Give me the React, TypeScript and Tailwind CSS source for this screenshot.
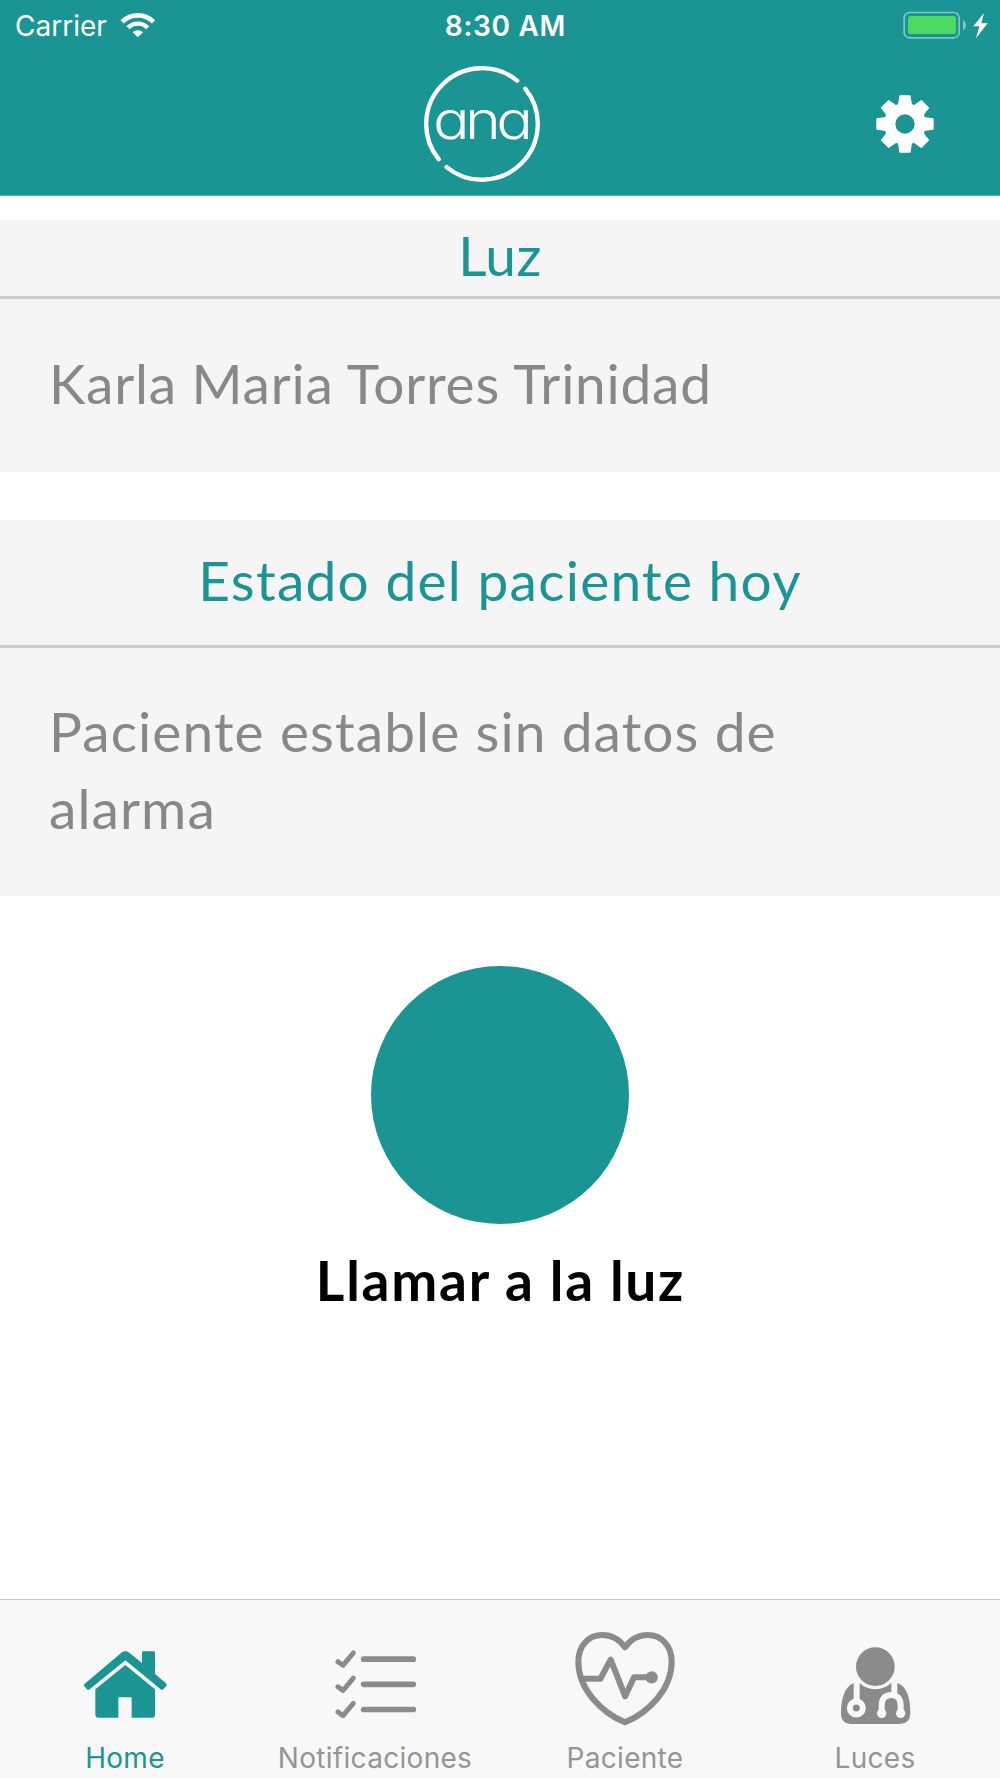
import React, { useState } from 'react'

const AnaLogo: React.FC = () => (
  <svg viewBox="65 193 360 360" className="h-[120px] w-[120px] text-white" fill="none">
    <path
      d="M115 478.600 A167.500 167.500 0 0 1 350.600 243 M375 267.400 A167.500 167.500 0 0 1 138.700 502.400"
      stroke="currentColor"
      strokeWidth="13"
      strokeLinecap="round"
    />
    <text
      x="98"
      y="418"
      textLength="286"
      lengthAdjust="spacingAndGlyphs"
      fill="currentColor"
      className="font-['Inter',sans-serif] text-[158px] font-[360] tracking-[-12px] [font-feature-settings:'cv11'] [text-rendering:geometricPrecision]"
    >
      ana
    </text>
  </svg>
)

const GearIcon: React.FC = () => (
  <svg viewBox="-90 -90 180 180" className="h-[60px] w-[60px] text-white" fill="currentColor">
    <circle r="46" fill="none" stroke="currentColor" strokeWidth="34" />
    {[0, 45, 90, 135, 180, 225, 270, 315].map((angle) => (
      <path
        key={angle}
        d="M-19 -56 Q-19 -60 -18 -63 L-15 -84 L15 -84 L18 -63 Q19 -60 19 -56 Z"
        stroke="currentColor"
        strokeWidth="4"
        strokeLinejoin="round"
        transform={`rotate(${angle})`}
      />
    ))}
  </svg>
)

const WifiIcon: React.FC = () => (
  <svg viewBox="360 30 108 90" className="h-[30px] w-9 text-white" fill="none">
    <path d="M366.500 62.500 A67 67 0 0 1 460.500 62.500" stroke="currentColor" strokeWidth="14" />
    <path d="M384 80 A41.500 41.500 0 0 1 443 80" stroke="currentColor" strokeWidth="13" />
    <path d="M413.500 109 L398 94 A22 22 0 0 1 429 94 Z" fill="currentColor" />
  </svg>
)

const BatteryIcon: React.FC = () => (
  <svg viewBox="186 27 264 96" className="h-8 w-[88px]">
    <rect x="192.500" y="34.500" width="165" height="76" rx="16" fill="none" stroke="#fff" strokeOpacity="0.45" strokeWidth="5" />
    <rect x="204" y="45" width="144" height="54" rx="8" fill="#4cd964" />
    <path d="M369 58 Q378 62 378 73 Q378 84 369 88 Z" fill="#fff" fillOpacity="0.45" />
    <path d="M432 36 L400 76 H418 L408 112 L443 67 H424 Z" fill="#fff" />
  </svg>
)

const HomeIcon: React.FC = () => (
  <svg viewBox="15 90 360 360" className="h-[120px] w-[120px]" fill="currentColor">
    <path d="M196 225 L106 298 V374 Q106 383 115 383 H175 V322 H215 V383 H276 Q285 383 285 374 V298 Z" />
    <path
      d="M187 186 Q196 181 205 186 L246 219 V188 Q246 184 250 184 H281 Q285 184 285 188 V252 L318 280 Q322 285 319 288 L310 298 Q306 301 302 298 L196 211 L89 298 Q85 302 81 298 L73 289 Q69 285 74 281 Z"
    />
  </svg>
)

const ChecklistIcon: React.FC = () => (
  <svg viewBox="165 90 360 360" className="h-[120px] w-[120px]" fill="none" stroke="currentColor" strokeLinecap="round" strokeLinejoin="round">
    {[0, 75.5, 151].map((y) => (
      <g key={y} transform={`translate(0 ${y})`}>
        <path d="M234 215 L249 226 L280 189" strokeWidth="15" />
        <path d="M311 207.500 H460" strokeWidth="17" />
      </g>
    ))}
  </svg>
)

const HeartIcon: React.FC = () => (
  <svg viewBox="75 90 360 360" className="h-[120px] w-[120px]" fill="none" stroke="currentColor" strokeLinecap="round" strokeLinejoin="round">
    <path
      d="M255 172 C238 148 214 135 187 135 C145 135 115 168 115 215 C115 298 185 368 255 397 C325 368 395 298 395 215 C395 168 365 135 323 135 C296 135 272 148 255 172 Z"
      strokeWidth="18"
    />
    <path d="M126 266.500 H181 L212 209 L255.500 319 L282 262 H334" strokeWidth="18" />
    <circle cx="335" cy="262" r="18.500" fill="currentColor" stroke="none" />
  </svg>
)

const DoctorIcon: React.FC = () => (
  <svg viewBox="45 90 360 360" className="h-[120px] w-[120px] text-[#8b8b8b]" fill="currentColor">
    <path d="M163 278 H291 C322 290 331 325 331 370 Q330 402 299 402 H155 Q123 402 123 370 C123 325 134 289 163 278 Z" />
    <circle cx="226" cy="230" r="68" className="text-[#f8f8f8]" />
    <g className="text-[#f8f8f8]" stroke="currentColor" strokeWidth="18" fill="none">
      <path d="M170 268 V335" />
      <path d="M283 268 V318" />
      <path d="M245 370 V346 C245 326 256 315 273.500 315 C291 315 302 326 302 346 V370" />
      <circle cx="169" cy="354" r="19.500" />
      <circle cx="245" cy="370" r="14" fill="currentColor" stroke="none" />
      <circle cx="302" cy="370" r="14" fill="currentColor" stroke="none" />
    </g>
    <circle cx="226" cy="230" r="58" />
  </svg>
)

const tabs = [
  { key: 'home', label: 'Home', icon: HomeIcon },
  { key: 'notificaciones', label: 'Notificaciones', icon: ChecklistIcon },
  { key: 'paciente', label: 'Paciente', icon: HeartIcon },
  { key: 'luces', label: 'Luces', icon: DoctorIcon },
]

const App: React.FC = () => {
  const [activeTab, setActiveTab] = useState('home')

  return (
    <div className="flex h-[1778px] w-[1000px] flex-col overflow-hidden bg-white font-['Lato',sans-serif]">
      {/* Header */}
      <header className="h-[196px] shrink-0 border-b border-[#54afaf] bg-[#1b9494]">
        <div className="grid h-[50px] grid-cols-[1fr_auto_1fr] items-center font-['Inter',sans-serif] text-[28px] leading-[52px] text-white">
          <div className="flex items-center gap-[13px] pl-[15px]">
            <span>Carrier</span>
            <WifiIcon />
          </div>
          <span className="pl-[11px] font-semibold tracking-[0.7px]">8:30 AM</span>
          <div className="flex justify-end pr-[10px]">
            <BatteryIcon />
          </div>
        </div>
        <div className="flex items-center justify-between pt-[14px] pr-[65px] pl-[422px]">
          <AnaLogo />
          <button aria-label="Ajustes">
            <GearIcon />
          </button>
        </div>
      </header>

      <main className="flex-1">
        {/* Luz */}
        <section className="mt-6 h-[252px] bg-[#f5f5f5]">
          <h2 className="h-[79px] border-b-3 border-[#cccccc] text-center text-[55px] leading-[71px] tracking-[0.4px] text-[#1b9494]">
            Luz
          </h2>
          <p className="px-[49px] pt-[46px] text-[55px] leading-[76.7px] tracking-[0.76px] text-[#888]">
            Karla Maria Torres Trinidad
          </p>
        </section>

        {/* Estado */}
        <section className="mt-12 h-[376px] bg-[#f5f5f5]">
          <h2 className="h-[128px] border-b-3 border-[#cccccc] pt-[22px] text-center text-[55px] leading-[77px] tracking-[1.28px] text-[#1b9494]">
            Estado del paciente hoy
          </h2>
          <p className="px-[49px] pt-[45px] text-[55px] leading-[76.7px] tracking-[1.1px] text-[#888]">
            Paciente estable sin datos de alarma
          </p>
        </section>

        {/* Call button */}
        <div className="mt-[70px] flex flex-col items-center">
          <button aria-label="Llamar" className="h-[258px] w-[258px] rounded-full bg-[#1b9494]" />
          <p className="mt-[23px] pl-px text-[55px] leading-[66px] font-bold tracking-[1.75px] text-black">
            Llamar a la luz
          </p>
        </div>
      </main>

      {/* Tab bar */}
      <nav className="grid h-[179px] shrink-0 grid-cols-4 border-t border-[#c4c4c4] bg-[#f8f8f8] pt-5">
        {tabs.map((tab) => {
          const Icon = tab.icon
          const isActive = activeTab === tab.key

          return (
            <button
              key={tab.key}
              onClick={() => setActiveTab(tab.key)}
              className={`flex flex-col items-center ${isActive ? 'text-[#1b9494]' : 'text-[#8b8b8b]'}`}
            >
              <Icon />
              <span
                className={`font-['Inter',sans-serif] text-[28px] leading-[37px] tracking-[0.3px] ${
                  isActive ? 'text-[#1b9494]' : 'text-[#959595]'
                }`}
              >
                {tab.label}
              </span>
            </button>
          )
        })}
      </nav>
    </div>
  )
}

export default App
